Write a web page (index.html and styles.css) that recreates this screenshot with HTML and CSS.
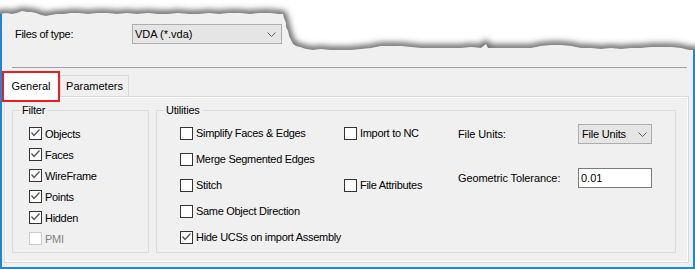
FILE: index.html
```html
<!DOCTYPE html>
<html>
<head>
<meta charset="utf-8">
<link rel="stylesheet" href="styles.css">
</head>
<body>
<div class="shot">
  <div class="dialog">
    <div class="files-row">
      <span class="files-label">Files of type:</span>
      <div class="combo combo-wide"><span>VDA (*.vda)</span><svg class="chev" width="9" height="5" viewBox="0 0 9 5"><polyline points="0.5,0.5 4.5,4.5 8.5,0.5" fill="none" stroke="#606060" stroke-width="1"/></svg></div>
    </div>
    <div class="sep"></div>
    <div class="tabs">
      <div class="tab tab-active">General</div>
      <div class="tab">Parameters</div>
    </div>
    <div class="panel">
      <div class="group group-filter">
        <div class="group-title">Filter</div>
        <div class="filter-list">
          <div class="check"><span class="box"><svg width="11" height="11" viewBox="0 0 11 11"><polyline points="1.5,4.5 4,7.5 9.5,1.5" fill="none" stroke="#555" stroke-width="1.3"/></svg></span>Objects</div>
          <div class="check"><span class="box"><svg width="11" height="11" viewBox="0 0 11 11"><polyline points="1.5,4.5 4,7.5 9.5,1.5" fill="none" stroke="#555" stroke-width="1.3"/></svg></span>Faces</div>
          <div class="check"><span class="box"><svg width="11" height="11" viewBox="0 0 11 11"><polyline points="1.5,4.5 4,7.5 9.5,1.5" fill="none" stroke="#555" stroke-width="1.3"/></svg></span>WireFrame</div>
          <div class="check"><span class="box"><svg width="11" height="11" viewBox="0 0 11 11"><polyline points="1.5,4.5 4,7.5 9.5,1.5" fill="none" stroke="#555" stroke-width="1.3"/></svg></span>Points</div>
          <div class="check"><span class="box"><svg width="11" height="11" viewBox="0 0 11 11"><polyline points="1.5,4.5 4,7.5 9.5,1.5" fill="none" stroke="#555" stroke-width="1.3"/></svg></span>Hidden</div>
          <div class="check disabled"><span class="box"></span>PMI</div>
        </div>
      </div>
      <div class="group group-util">
        <div class="group-title">Utilities</div>
        <div class="util-body">
          <div class="util-checks">
            <div class="check"><span class="box"></span>Simplify Faces &amp; Edges</div>
            <div class="check"><span class="box"></span>Import to NC</div>
            <div class="check"><span class="box"></span>Merge Segmented Edges</div>
            <div></div>
            <div class="check"><span class="box"></span>Stitch</div>
            <div class="check"><span class="box"></span>File Attributes</div>
            <div class="check"><span class="box"></span>Same Object Direction</div>
            <div></div>
            <div class="check"><span class="box"><svg width="11" height="11" viewBox="0 0 11 11"><polyline points="1.5,4.5 4,7.5 9.5,1.5" fill="none" stroke="#555" stroke-width="1.3"/></svg></span>Hide UCSs on import Assembly</div>
          </div>
          <div class="util-fields">
            <div class="field"><span class="field-label">File Units:</span><div class="combo combo-small"><span>File Units</span><svg class="chev" width="9" height="5" viewBox="0 0 9 5"><polyline points="0.5,0.5 4.5,4.5 8.5,0.5" fill="none" stroke="#606060" stroke-width="1"/></svg></div></div>
            <div class="field"><span class="field-label">Geometric Tolerance:</span><div class="textbox">0.01</div></div>
          </div>
        </div>
      </div>
    </div>
  </div>
  <svg class="tear" width="695" height="64" viewBox="0 0 695 64">
    <defs>
      <clipPath id="above"><path d="M0,0 L0,14 L6,13 L12,14 L17,13 L22,11 L27,12 L31,12 L36,13 L41,15 L46,16 L51,15 L57,14 L64,14 L71,13 L79,13 L88,14 L97,13 L107,13 L117,14 L127,13 L137,14 L148,13 L158,14 L168,14 L178,13 L189,14 L199,14 L209,13 L219,14 L229,13 L240,13 L250,14 L260,13 L270,13 L279,14 L283,14 L284,18 L286,23 L286,27 L288,31 L289,36 L291,40 L293,44 L296,46 L300,47 L306,49 L313,50 L321,49 L330,50 L341,50 L351,50 L361,49 L371,48 L381,46 L391,46 L401,46 L411,47 L421,48 L431,48 L441,48 L451,48 L461,48 L471,47 L481,48 L486,44 L488,48 L501,48 L511,48 L521,48 L531,48 L541,46 L551,45 L561,45 L571,46 L581,48 L591,48 L601,49 L611,48 L621,49 L631,48 L641,48 L651,47 L661,47 L671,47 L681,48 L689,50 L695,50 L695,0 Z"/></clipPath>
      <filter id="soft" x="-20" y="-20" width="740" height="110" filterUnits="userSpaceOnUse"><feGaussianBlur stdDeviation="3.2"/></filter>
    </defs>
    <path d="M0,0 L0,14 L6,13 L12,14 L17,13 L22,11 L27,12 L31,12 L36,13 L41,15 L46,16 L51,15 L57,14 L64,14 L71,13 L79,13 L88,14 L97,13 L107,13 L117,14 L127,13 L137,14 L148,13 L158,14 L168,14 L178,13 L189,14 L199,14 L209,13 L219,14 L229,13 L240,13 L250,14 L260,13 L270,13 L279,14 L283,14 L284,18 L286,23 L286,27 L288,31 L289,36 L291,40 L293,44 L296,46 L300,47 L306,49 L313,50 L321,49 L330,50 L341,50 L351,50 L361,49 L371,48 L381,46 L391,46 L401,46 L411,47 L421,48 L431,48 L441,48 L451,48 L461,48 L471,47 L481,48 L486,44 L488,48 L501,48 L511,48 L521,48 L531,48 L541,46 L551,45 L561,45 L571,46 L581,48 L591,48 L601,49 L611,48 L621,49 L631,48 L641,48 L651,47 L661,47 L671,47 L681,48 L689,50 L695,50 L695,0 Z" fill="#fff"/>
    <g clip-path="url(#above)">
      <path d="M-10,14 L0,14 L6,13 L12,14 L17,13 L22,11 L27,12 L31,12 L36,13 L41,15 L46,16 L51,15 L57,14 L64,14 L71,13 L79,13 L88,14 L97,13 L107,13 L117,14 L127,13 L137,14 L148,13 L158,14 L168,14 L178,13 L189,14 L199,14 L209,13 L219,14 L229,13 L240,13 L250,14 L260,13 L270,13 L279,14 L283,14 L284,18 L286,23 L286,27 L288,31 L289,36 L291,40 L293,44 L296,46 L300,47 L306,49 L313,50 L321,49 L330,50 L341,50 L351,50 L361,49 L371,48 L381,46 L391,46 L401,46 L411,47 L421,48 L431,48 L441,48 L451,48 L461,48 L471,47 L481,48 L486,44 L488,48 L501,48 L511,48 L521,48 L531,48 L541,46 L551,45 L561,45 L571,46 L581,48 L591,48 L601,49 L611,48 L621,49 L631,48 L641,48 L651,47 L661,47 L671,47 L681,48 L689,50 L705,50" fill="none" stroke="#4a4a4a" stroke-width="6" filter="url(#soft)"/>
    </g>
  </svg>
</div>
</body>
</html>
```

FILE: styles.css
```css
body {
  margin: 0;
  background: #ffffff;
  font-family: "Liberation Sans", Arial, sans-serif;
  font-size: 11px;
  color: #000000;
}

.shot {
  position: relative;
  width: 695px;
  height: 269px;
}

.tear {
  position: absolute;
  top: 0;
  left: 0;
  pointer-events: none;
}

.dialog {
  box-sizing: border-box;
  width: 695px;
  height: 269px;
  display: flex;
  flex-direction: column;
  align-items: flex-start;
  padding-top: 24px;
  background: #f0f0f0;
  border: 2px solid #1c86da;
  border-top: 0;
}

.files-row {
  display: flex;
  align-items: center;
  height: 20px;
  padding-left: 13px;
}

.files-label {
  width: 117px;
  letter-spacing: -0.3px;
}

.combo {
  box-sizing: border-box;
  height: 20px;
  display: flex;
  align-items: center;
  justify-content: space-between;
  border: 1px solid #adadad;
  background: #e5e5e5;
  white-space: nowrap;
}

.combo-wide {
  width: 150px;
  padding: 0 5px 0 2px;
}

.combo-small {
  width: 74px;
  padding: 0 4px 0 3px;
  letter-spacing: -0.2px;
}

.chev {
  flex: none;
}

.sep {
  margin: 23px 0 0 10px;
  width: 675px;
  height: 1px;
  background: #a0a0a0;
}

.tabs {
  display: flex;
  align-items: flex-end;
  margin-top: 3px;
  height: 25px;
}

.tab {
  box-sizing: border-box;
  width: 69px;
  height: 21px;
  padding-top: 3px;
  line-height: 14px;
  text-align: center;
  border: 1px solid #d9d9d9;
  border-bottom: 0;
  background: #f0f0f0;
}

.tab-active {
  position: relative;
  z-index: 1;
  width: 58px;
  height: 31px;
  margin-bottom: -6px;
  padding-top: 6px;
  border: 2px solid #ec1c24;
  background: #ffffff;
}

.panel {
  box-sizing: border-box;
  margin-left: 2px;
  width: 685px;
  height: 167px;
  display: flex;
  gap: 7px;
  padding: 13px 0 0 7px;
  border: 1px solid #d9d9d9;
  box-shadow: inset 0 0 0 1px #ffffff;
}

.group {
  box-sizing: border-box;
  height: 143px;
  display: flex;
  flex-direction: column;
  align-items: flex-start;
  border: 1px solid #dcdcdc;
}

.group-filter {
  width: 137px;
}

.group-util {
  width: 520px;
}

.group-title {
  margin: -7px 0 0 7px;
  padding: 0 2px;
  height: 13px;
  line-height: 13px;
  background: #f0f0f0;
  letter-spacing: -0.2px;
}

.filter-list {
  margin: 6px 0 0 16px;
  display: flex;
  flex-direction: column;
}

.filter-list .check {
  height: 21px;
}

.check {
  display: flex;
  align-items: center;
  gap: 3px;
  white-space: nowrap;
  letter-spacing: -0.3px;
}

.box {
  box-sizing: border-box;
  flex: none;
  width: 13px;
  height: 13px;
  display: flex;
  border: 1px solid #333333;
  background: #ffffff;
}

.check.disabled {
  color: #838383;
}

.check.disabled .box {
  border-color: #cccccc;
}

.util-body {
  display: flex;
  align-items: flex-start;
  margin: 3px 0 0 23px;
}

.util-checks {
  display: grid;
  grid-template-columns: 164px 114px;
  grid-auto-rows: 26px;
}

.util-fields {
  margin-top: 4px;
  display: flex;
  flex-direction: column;
  gap: 24px;
}

.field {
  display: flex;
  align-items: center;
  height: 20px;
}

.field-label {
  width: 120px;
  letter-spacing: -0.1px;
}

.textbox {
  box-sizing: border-box;
  width: 74px;
  height: 20px;
  line-height: 18px;
  padding-left: 2px;
  border: 1px solid #7a7a7a;
  background: #ffffff;
}
```
